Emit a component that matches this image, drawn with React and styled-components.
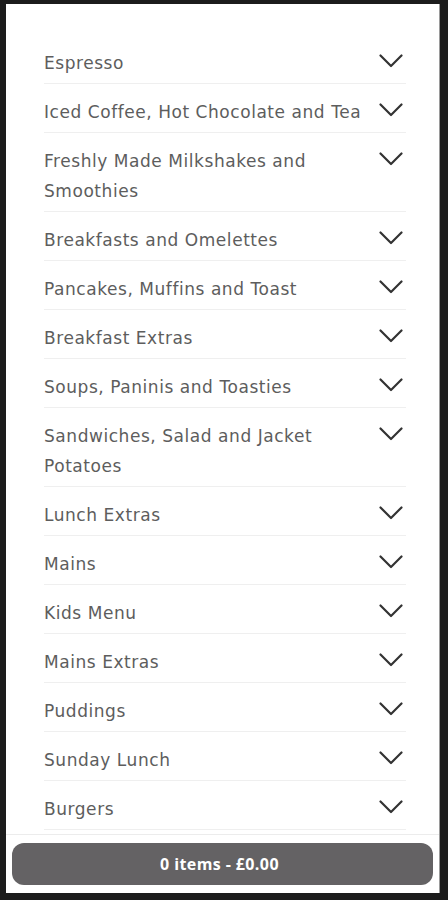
import React from "react";
import styled, { createGlobalStyle } from "styled-components";

const Global = createGlobalStyle`
  html, body { margin: 0; padding: 0; background: #1c1c1c; }
  * { box-sizing: border-box; }
`;

const Frame = styled.div`
  width: 448px;
  height: 900px;
  padding: 4px 8px 7px 6px;
  background: #1c1c1c;
`;

const Panel = styled.div`
  height: 100%;
  background: #fff;
  border-right: 1px solid #9a9a9a;
  display: flex;
  flex-direction: column;
  overflow: hidden;
`;

const List = styled.ul`
  flex: 1;
  list-style: none;
  margin: 0;
  padding: 31px 33px 0 38px;
  overflow: hidden;
`;

const Row = styled.li`
  display: flex;
  align-items: flex-start;
  justify-content: space-between;
  gap: 12px;
  padding: 13px 0 5px;
  border-bottom: 1px solid #efefef;
`;

const Label = styled.span`
  font-family: "DejaVu Sans", "Noto Sans", sans-serif;
  font-size: 17px;
  font-weight: 400;
  letter-spacing: 0.55px;
  line-height: 30px;
  color: #5d5d5d;
`;

const Chevron = styled.svg`
  flex: none;
  width: 24px;
  height: 14px;
  margin: 6px 3px 0 0;
`;

const Footer = styled.div`
  border-top: 1px solid #ececec;
  padding: 8px 6px 8px 6px;
`;

const CartButton = styled.button`
  width: 100%;
  height: 42px;
  border: none;
  border-radius: 12px;
  background: #646264;
  color: #fff;
  font-family: "Open Sans", "Noto Sans", sans-serif;
  font-size: 16px;
  font-weight: 700;
  letter-spacing: 0.4px;
  padding: 0 6px 0 0;
  cursor: pointer;
`;

const items = [
  "Espresso",
  "Iced Coffee, Hot Chocolate and Tea",
  "Freshly Made Milkshakes and Smoothies",
  "Breakfasts and Omelettes",
  "Pancakes, Muffins and Toast",
  "Breakfast Extras",
  "Soups, Paninis and Toasties",
  "Sandwiches, Salad and Jacket Potatoes",
  "Lunch Extras",
  "Mains",
  "Kids Menu",
  "Mains Extras",
  "Puddings",
  "Sunday Lunch",
  "Burgers",
];

export default function App() {
  return (
    <>
      <Global />
      <Frame>
        <Panel>
          <List>
            {items.map((t) => (
              <Row key={t}>
                <Label>{t}</Label>
                <Chevron viewBox="0 0 24 14" fill="none">
                  <path d="M1.5 1.5 L12 12 L22.5 1.5" stroke="#333" strokeWidth="2.2" strokeLinecap="round" strokeLinejoin="round" />
                </Chevron>
              </Row>
            ))}
          </List>
          <Footer>
            <CartButton>0 items - £0.00</CartButton>
          </Footer>
        </Panel>
      </Frame>
    </>
  );
}
